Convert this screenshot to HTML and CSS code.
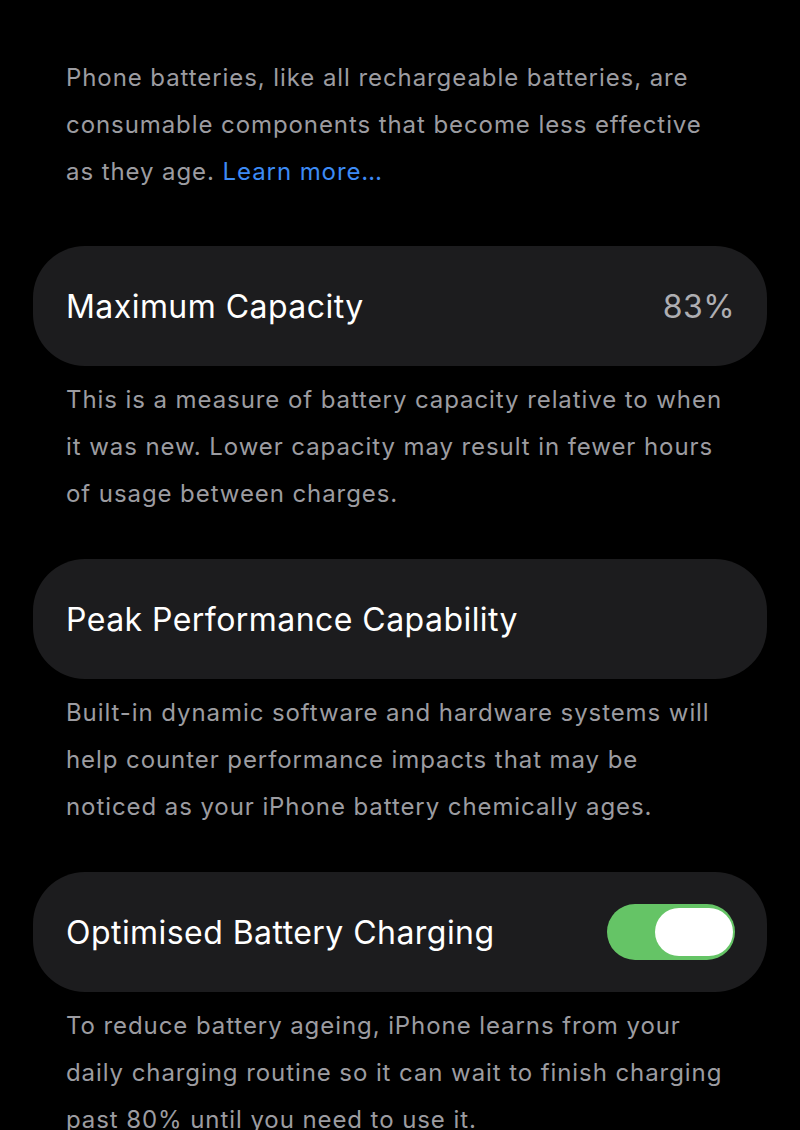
FILE: index.html
```html
<!DOCTYPE html>
<html lang="en">
<head>
<meta charset="utf-8">
<title>Battery Health</title>
<link rel="stylesheet" href="styles.css">
</head>
<body>
<main class="page">
  <p class="note intro">Phone batteries, like all rechargeable batteries, are consumable components that become less effective as they age. <span class="link">Learn more…</span></p>

  <section class="group">
    <div class="card">
      <span class="title">Maximum Capacity</span>
      <span class="value">83%</span>
    </div>
    <p class="note">This is a measure of battery capacity relative to when it was new. Lower capacity may result in fewer hours of usage between charges.</p>
  </section>

  <section class="group">
    <div class="card">
      <span class="title">Peak Performance Capability</span>
    </div>
    <p class="note">Built-in dynamic software and hardware systems will help counter performance impacts that may be noticed as your iPhone battery chemically ages.</p>
  </section>

  <section class="group">
    <div class="card">
      <span class="title">Optimised Battery Charging</span>
      <span class="toggle on"><span class="knob"></span></span>
    </div>
    <p class="note">To reduce battery ageing, iPhone learns from your daily charging routine so it can wait to finish charging past 80% until you need to use it.</p>
  </section>
</main>
</body>
</html>
```
FILE: styles.css
```css
html, body {
  margin: 0;
  padding: 0;
  background: #000;
}
body {
  font-family: Inter, "Noto Sans", "Liberation Sans", sans-serif;
  color: #fff;
  height: 1130px;
  overflow: hidden;
}
.page {
  padding: 54px 33px 0 33px;
  display: flex;
  flex-direction: column;
}
.note {
  margin: 0;
  padding: 0 35px 0 33px;
  font-size: 24px;
  line-height: 47px;
  color: #9c9ca1;
  letter-spacing: 0.92px;
}
.intro {
  margin-bottom: 51px;
}
.link {
  color: #3d8bf5;
}
.group {
  display: flex;
  flex-direction: column;
  margin-bottom: 42px;
}
.card {
  box-sizing: border-box;
  height: 120px;
  background: #1c1c1e;
  border-radius: 52px;
  padding: 0 32px 0 33px;
  display: flex;
  align-items: center;
  justify-content: space-between;
  margin-bottom: 10px;
}
.title {
  font-size: 32px;
  letter-spacing: 0.45px;
  color: #fff;
}
.value {
  font-size: 32px;
  letter-spacing: 0.4px;
  color: #aeaeb2;
}
.toggle {
  box-sizing: border-box;
  width: 128px;
  height: 56px;
  border-radius: 28px;
  background: #65c466;
  padding: 4px 2px;
  display: flex;
  justify-content: flex-end;
}
.knob {
  width: 78px;
  height: 48px;
  border-radius: 24px;
  background: #fff;
}
```
